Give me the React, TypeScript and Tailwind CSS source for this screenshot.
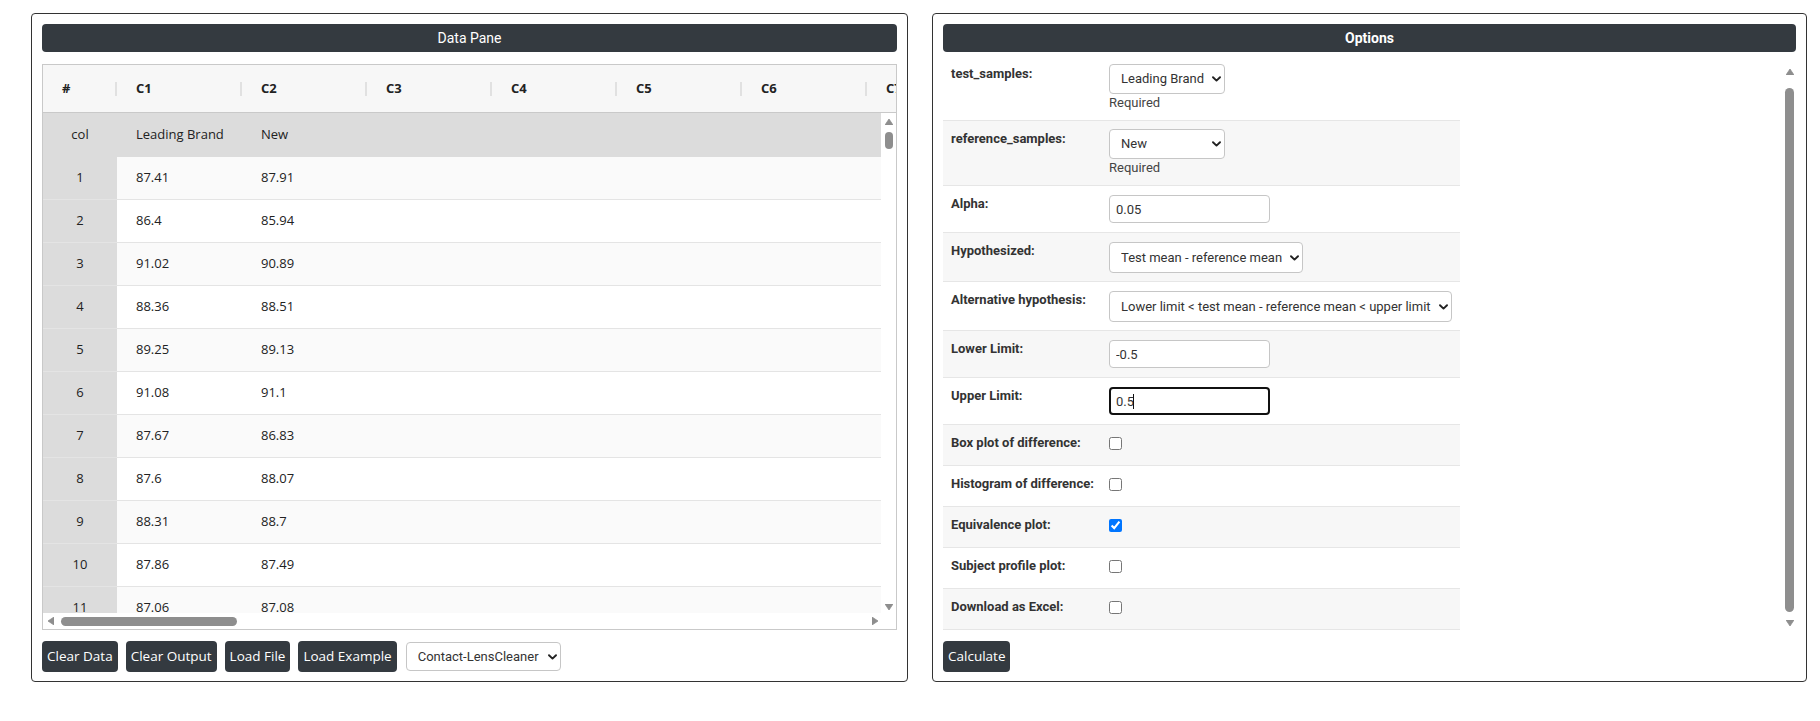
import React from 'react'

const samples: [string, string][] = [
  ['87.41', '87.91'],
  ['86.4', '85.94'],
  ['91.02', '90.89'],
  ['88.36', '88.51'],
  ['89.25', '89.13'],
  ['91.08', '91.1'],
  ['87.67', '86.83'],
  ['87.6', '88.07'],
  ['88.31', '88.7'],
  ['87.86', '87.49'],
  ['87.06', '87.08'],
]

const columns = ['C1', 'C2', 'C3', 'C4', 'C5', 'C6', 'C7']

function Arrow({ dir }: { dir: 'up' | 'down' | 'left' | 'right' }) {
  const vertical = dir === 'up' || dir === 'down'
  const points = {
    up: '0,6 4,0 8,6',
    down: '0,0 8,0 4,6',
    left: '6,0 6,8 0,4',
    right: '0,0 0,8 6,4',
  }[dir]
  return (
    <svg
      width={vertical ? 8 : 6}
      height={vertical ? 6 : 8}
      viewBox={vertical ? '0 0 8 6' : '0 0 6 8'}
      className="shrink-0"
    >
      <polygon points={points} fill="#8e8e8e" strokeLinejoin="round" stroke="#8e8e8e" strokeWidth="0.8" />
    </svg>
  )
}

function Chevron() {
  return (
    <svg width="9" height="6" viewBox="0 0 9 6" className="pointer-events-none absolute right-[4px] top-1/2 -translate-y-1/2">
      <path d="M1 1.2 L4.5 4.6 L8 1.2" fill="none" stroke="#222" strokeWidth="1.9" strokeLinecap="round" strokeLinejoin="round" />
    </svg>
  )
}

function Select({ value, options, className }: { value: string; options: string[]; className: string }) {
  return (
    <div className={`relative ${className}`}>
      <select
        defaultValue={value}
        className="h-full w-full appearance-none rounded-[4px] border border-[#c6c6c6] bg-white pl-[11px] pr-5 text-[13px] text-[#333] outline-none"
      >
        {options.map((o) => (
          <option key={o}>{o}</option>
        ))}
      </select>
      <Chevron />
    </div>
  )
}

function HeadCell({ label, wide }: { label: string; wide?: boolean }) {
  return (
    <div className={`flex h-full shrink-0 items-center justify-between pl-[19px] font-bold ${wide ? 'w-[125px]' : 'w-[74px]'}`}>
      <span>{label}</span>
      <span className="h-[14px] w-[2px] bg-[#e1e1e1]" />
    </div>
  )
}

function DataGrid() {
  return (
    <div className="mt-[12px] flex h-[566px] flex-col overflow-hidden border border-[#c9c9c9] font-['Open_Sans',sans-serif] text-[13px] text-[#222]">
      <div className="flex h-[48px] shrink-0 overflow-hidden border-b border-[#c9c9c9] bg-[#f7f7f7]">
        <HeadCell label="#" />
        {columns.map((c) => (
          <HeadCell key={c} label={c} wide />
        ))}
      </div>

      <div className="flex min-h-0 flex-1">
        <div className="min-w-0 flex-1 overflow-hidden">
          <div className="flex h-[44px] items-center bg-[#dcdcdc]">
            <div className="w-[74px] shrink-0 text-center">col</div>
            <div className="w-[125px] shrink-0 pl-[19px]">Leading Brand</div>
            <div className="w-[125px] shrink-0 pl-[19px]">New</div>
          </div>
          {samples.map(([a, b], i) => (
            <div
              key={i}
              className={`flex h-[43px] border-b border-[#e4e4e4] ${i % 2 === 0 ? 'bg-[#fafafa]' : 'bg-white'}`}
            >
              <div className="flex w-[74px] shrink-0 items-center justify-center bg-[#dcdcdc]">{i + 1}</div>
              <div className="flex w-[125px] shrink-0 items-center pl-[19px]">{a}</div>
              <div className="flex w-[125px] shrink-0 items-center pl-[19px]">{b}</div>
            </div>
          ))}
        </div>

        {/* vertical scrollbar */}
        <div className="flex w-[15px] shrink-0 flex-col items-center bg-white pb-[3px] pt-[6px]">
          <Arrow dir="up" />
          <div className="mt-[7px] h-[17px] w-[8px] rounded-full bg-[#8e8e8e]" />
          <div className="flex-1" />
          <Arrow dir="down" />
        </div>
      </div>

      {/* horizontal scrollbar */}
      <div className="flex h-[16px] shrink-0 items-center bg-white pl-[5px] pr-[18px]">
        <Arrow dir="left" />
        <div className="ml-[7px] h-[9px] w-[176px] rounded-full bg-[#8e8e8e]" />
        <div className="flex-1" />
        <Arrow dir="right" />
      </div>
    </div>
  )
}

function DarkButton({ children }: { children: React.ReactNode }) {
  return (
    <button className="h-[31px] rounded-[4px] bg-[#343a40] px-[5px] font-['Open_Sans',sans-serif] text-[13.5px] text-white">
      {children}
    </button>
  )
}

function DataPane() {
  return (
    <section className="flex h-[669px] w-[877px] flex-col rounded-[4px] border border-[#333] px-[10px] pb-[9px] pt-[10px]">
      <div className="flex h-[28px] shrink-0 items-center justify-center rounded-[4px] bg-[#343a40] text-[14px] text-white">
        Data Pane
      </div>
      <DataGrid />
      <div className="mt-[11px] flex items-center gap-2">
        <DarkButton>Clear Data</DarkButton>
        <DarkButton>Clear Output</DarkButton>
        <DarkButton>Load File</DarkButton>
        <DarkButton>Load Example</DarkButton>
        <Select
          value="Contact-LensCleaner"
          options={['Contact-LensCleaner']}
          className="ml-px h-[29px] w-[155px]"
        />
      </div>
    </section>
  )
}

function FormRow({ label, shaded, children }: { label: string; shaded?: boolean; children: React.ReactNode }) {
  return (
    <tr className={`border-b border-[#e6e6e6] ${shaded ? 'bg-[#f7f7f7]' : 'bg-white'}`}>
      <th className="w-[158px] whitespace-nowrap px-2 py-2 text-left align-top font-bold leading-[19px]">{label}</th>
      <td className="px-2 py-2 align-top">{children}</td>
    </tr>
  )
}

function TextBox({ value }: { value: string }) {
  return (
    <div className="h-[30px] py-px">
      <input
        defaultValue={value}
        className="h-[28px] w-[161px] rounded-[4px] border border-[#c6c6c6] bg-white px-[6px] text-[13px] text-[#333] outline-none"
      />
    </div>
  )
}

function Check({ checked }: { checked?: boolean }) {
  return (
    <div className="h-[24px] pt-[4px]">
      <input type="checkbox" defaultChecked={checked} className="m-0 block h-[13px] w-[13px]" />
    </div>
  )
}

function OptionsPane() {
  return (
    <section className="flex h-[669px] w-[875px] flex-col rounded-[4px] border border-[#333] px-[10px] pb-[9px] pt-[10px]">
      <div className="flex h-[28px] shrink-0 items-center justify-center rounded-[4px] bg-[#343a40] text-[14px] font-bold text-white">
        Options
      </div>

      <div className="mt-[4px] flex h-[574px]">
        <table className="w-[517px] table-fixed self-start text-[13px] text-[#333]">
          <tbody>
            <FormRow label="test_samples:">
              <Select value="Leading Brand" options={['Leading Brand', 'New']} className="h-[30px] w-[116px]" />
              <div className="leading-[18px] text-[#444]">Required</div>
            </FormRow>
            <FormRow label="reference_samples:" shaded>
              <Select value="New" options={['Leading Brand', 'New']} className="h-[30px] w-[116px]" />
              <div className="leading-[18px] text-[#444]">Required</div>
            </FormRow>
            <FormRow label="Alpha:">
              <TextBox value="0.05" />
            </FormRow>
            <FormRow label="Hypothesized:" shaded>
              <div className="h-[32px] pt-px">
                <Select value="Test mean - reference mean" options={['Test mean - reference mean']} className="h-[31px] w-[194px]" />
              </div>
            </FormRow>
            <FormRow label="Alternative hypothesis:">
              <div className="h-[32px] pt-px">
                <Select
                  value="Lower limit < test mean - reference mean < upper limit"
                  options={['Lower limit < test mean - reference mean < upper limit']}
                  className="h-[31px] w-[343px]"
                />
              </div>
            </FormRow>
            <FormRow label="Lower Limit:" shaded>
              <TextBox value="-0.5" />
            </FormRow>
            <FormRow label="Upper Limit:">
              <div className="relative h-[30px] py-px">
                <input
                  defaultValue="0.5"
                  className="h-[28px] w-[161px] rounded-[4px] border-2 border-[#111] bg-white px-[5px] text-[13px] text-[#333] outline-none"
                />
                <span className="absolute left-[24px] top-[8px] h-[15px] w-px bg-[#111]" />
              </div>
            </FormRow>
            <FormRow label="Box plot of difference:" shaded>
              <Check />
            </FormRow>
            <FormRow label="Histogram of difference:">
              <Check />
            </FormRow>
            <FormRow label="Equivalence plot:" shaded>
              <Check checked />
            </FormRow>
            <FormRow label="Subject profile plot:">
              <Check />
            </FormRow>
            <FormRow label="Download as Excel:" shaded>
              <Check />
            </FormRow>
          </tbody>
        </table>

        <div className="flex-1" />

        {/* scrollbar of the options list */}
        <div className="mr-px flex w-[11px] flex-col items-center pt-[13px]">
          <Arrow dir="up" />
          <div className="mt-[13px] h-[524px] w-[9px] rounded-full bg-[#8e8e8e]" />
          <div className="mt-[8px]">
            <Arrow dir="down" />
          </div>
        </div>
      </div>

      <div className="mt-[11px] flex">
        <DarkButton>Calculate</DarkButton>
      </div>
    </section>
  )
}

export default function App() {
  return (
    <div className="flex min-h-[721px] gap-[24px] bg-white pl-[31px] pt-[13px] font-[Roboto,sans-serif]">
      <DataPane />
      <OptionsPane />
    </div>
  )
}
